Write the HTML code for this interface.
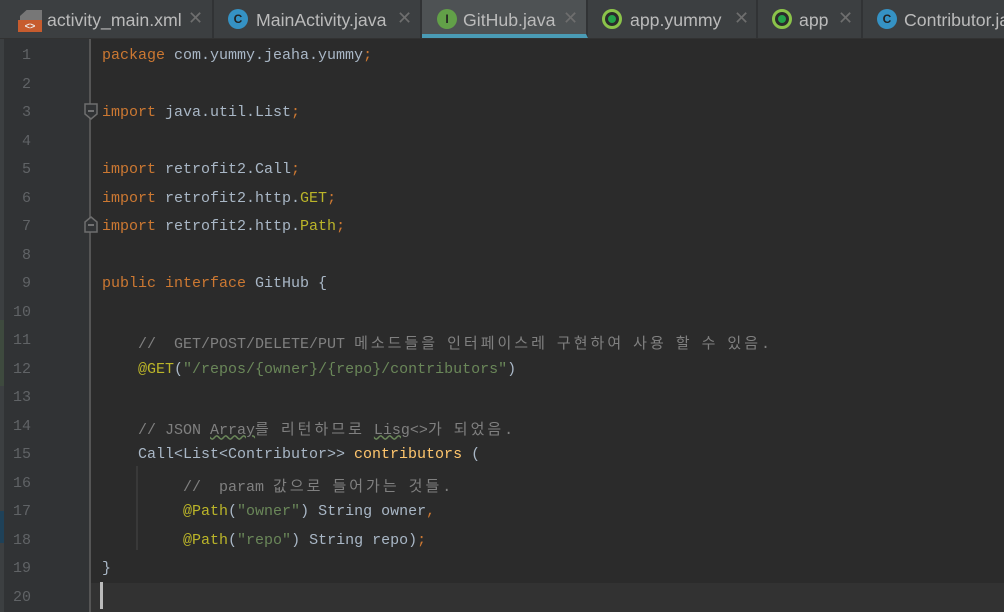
<!DOCTYPE html>
<html><head><meta charset="utf-8"><style>
body{margin:0;width:1004px;height:612px;overflow:hidden;background:#2b2b2b;position:relative;font-family:"Liberation Mono","Noto Sans CJK KR",monospace;}
.tabs{position:absolute;left:0;top:0;width:1004px;height:38px;background:#3c3f41;border-bottom:1px solid #323232;}
.tab{position:absolute;top:0;height:38px;background:#3c3f41;border-right:2px solid #313335;font:17.7px "Liberation Sans",sans-serif;color:#bbbbbb;box-sizing:border-box;white-space:nowrap;overflow:hidden}
.tab .t{position:absolute;top:10px}
.tab .x{position:absolute;top:8px;color:#6e6e6e;font-size:18px}
.act{background:#4e5254;border-bottom:4px solid #4a9bb5}
.ic{position:absolute;top:9px;width:20px;height:20px;border-radius:50%;font:bold 12px "Liberation Sans",sans-serif;text-align:center;line-height:20px;color:#222}
.gut{position:absolute;left:4px;top:39px;width:85px;height:573px;background:#313335}
.gl{position:absolute;left:89px;top:39px;width:2px;height:573px;background:#555555}
.ln{position:absolute;left:0;width:31px;text-align:right;color:#606366;font-size:15px}
.code{position:absolute;left:102px;color:#a9b7c6;font-size:15px;white-space:pre}
.k{color:#cc7832}.s{color:#6a8759}.a{color:#bbb529}.c{color:#808080}.f{color:#ffc66d}
.kr{letter-spacing:3px}
.w{text-decoration:underline wavy #6a8759}
</style></head><body>
<div class="tabs">
 <div class="tab" style="left:0;width:214px">
  <div style="position:absolute;left:20px;top:10px;width:22px;height:20px;background:#777;clip-path:polygon(30% 0,100% 0,100% 50%,0 50%,0 30%)"></div>
  <div style="position:absolute;left:18px;top:20px;width:24px;height:12px;background:#c75c2e;color:#eee;font:bold 9px sans-serif;text-align:center;line-height:12px">&lt;&gt;</div>
  <span class="t" style="left:47px">activity_main.xml</span><span class="x" style="left:188px">✕</span></div>
 <div class="tab" style="left:214px;width:208px">
  <div class="ic" style="left:14px;background:#3592c4">C</div>
  <span class="t" style="left:42px">MainActivity.java</span><span class="x" style="left:183px">✕</span></div>
 <div class="tab act" style="left:422px;width:166px">
  <div class="ic" style="left:15px;background:#62a048">I</div>
  <span class="t" style="left:41px">GitHub.java</span><span class="x" style="left:141px">✕</span></div>
 <div class="tab" style="left:588px;width:170px">
  <div class="ic" style="left:14px;border:3px solid #8bc34a;width:14px;height:14px;background:#2b2b2b;box-shadow:inset 0 0 0 3px #2b2b2b, inset 0 0 0 8px #23a34a"></div>
  <span class="t" style="left:42px">app.yummy</span><span class="x" style="left:146px">✕</span></div>
 <div class="tab" style="left:758px;width:105px">
  <div class="ic" style="left:14px;border:3px solid #8bc34a;width:14px;height:14px;background:#2b2b2b;box-shadow:inset 0 0 0 3px #2b2b2b, inset 0 0 0 8px #23a34a"></div>
  <span class="t" style="left:41px">app</span><span class="x" style="left:80px">✕</span></div>
 <div class="tab" style="left:863px;width:160px">
  <div class="ic" style="left:14px;background:#3592c4">C</div>
  <span class="t" style="left:41px">Contributor.java</span></div>
</div>
<div style="position:absolute;left:0;top:39px;width:4px;height:573px;background:#3c3f41"></div>
<div style="position:absolute;left:0;top:320px;width:4px;height:66px;background:#3e4a3e"></div>
<div style="position:absolute;left:0;top:511px;width:4px;height:32px;background:#1f4158"></div>
<div class="gut"></div>
<div style="position:absolute;left:91px;top:583px;width:913px;height:29px;background:#323232"></div>
<div class="gl"></div>
<div style="position:absolute;left:100px;top:582px;width:3px;height:27px;background:#bbbbbb"></div>
<div style="position:absolute;left:136px;top:466px;width:2px;height:84px;background:#393939"></div>
<svg style="position:absolute;left:83px;top:102px" width="16" height="20"><path d="M2 2H14V12L8 17L2 12Z" fill="#313335" stroke="#6e6e6e" stroke-width="1.5"/><path d="M5 9H11" stroke="#888" stroke-width="1.5"/></svg>
<svg style="position:absolute;left:83px;top:214px" width="16" height="20"><path d="M2 18H14V8L8 3L2 8Z" fill="#313335" stroke="#6e6e6e" stroke-width="1.5"/><path d="M5 11H11" stroke="#888" stroke-width="1.5"/></svg>
<div id="lines"></div>
<script>
var L=[
'<span class="k">package</span> com.yummy.jeaha.yummy<span class="k">;</span>','',
'<span class="k">import</span> java.util.List<span class="k">;</span>','',
'<span class="k">import</span> retrofit2.Call<span class="k">;</span>',
'<span class="k">import</span> retrofit2.http.<span class="a">GET</span><span class="k">;</span>',
'<span class="k">import</span> retrofit2.http.<span class="a">Path</span><span class="k">;</span>','',
'<span class="k">public interface</span> GitHub {','',
'    <span class="c">//  GET/POST/DELETE/PUT 메소드들을 인터페이스레 구현하여 사용 할 수 있음.</span>',
'    <span class="a">@GET</span>(<span class="s">"/repos/{owner}/{repo}/contributors"</span>)','',
'    <span class="c">// JSON <span class="w">Array</span>를 리턴하므로 <span class="w">Lisg</span>&lt;&gt;가 되었음.</span>',
'    Call&lt;List&lt;Contributor&gt;&gt; <span class="f">contributors</span> (',
'         <span class="c">//  param 값으로 들어가는 것들.</span>',
'         <span class="a">@Path</span>(<span class="s">"owner"</span>) String owner<span class="k">,</span>',
'         <span class="a">@Path</span>(<span class="s">"repo"</span>) String repo)<span class="k">;</span>',
'}',''];
var h='';
for(var i=0;i<20;i++){var y=47+i*28.5;
var t=L[i].replace(/[\uAC00-\uD7A3]+/g,function(m){return '<span class="kr">'+m+'</span>';});
h+='<div class="ln" style="top:'+y+'px">'+(i+1)+'</div><div class="code" style="top:'+y+'px">'+t+'</div>';}
document.getElementById('lines').innerHTML=h;
</script>
</body></html>
